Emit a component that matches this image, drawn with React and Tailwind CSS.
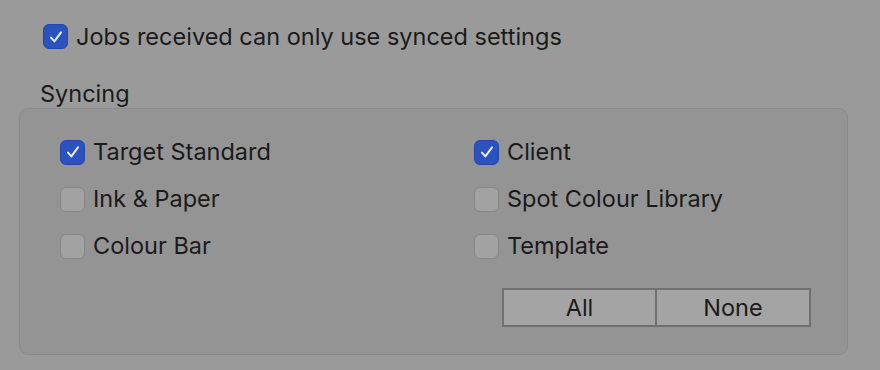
import React, { useState } from "react";

const font = { fontFamily: 'Inter, "Liberation Sans", Arial, sans-serif' };

const Check = ({ checked, onChange }) => (
  <button
    onClick={onChange}
    className={
      checked
        ? "w-[25px] h-[25px] rounded-[6px] bg-[#2b52bd] border border-[#2447a8] flex items-center justify-center shrink-0"
        : "w-[25px] h-[25px] rounded-[6px] bg-[#a2a2a2] border border-[#868686] flex items-center justify-center shrink-0"
    }
  >
    {checked && (
      <svg width="16" height="16" viewBox="0 0 16 16" fill="none">
        <path d="M3 8.6 L6.4 12.4 L13 3.4" stroke="#e8ecf7" strokeWidth="2" strokeLinecap="round" strokeLinejoin="round" />
      </svg>
    )}
  </button>
);

const Row = ({ label, checked, onChange }) => (
  <div className="flex items-center gap-[8px] h-[25px]">
    <Check checked={checked} onChange={onChange} />
    <span className="text-[23.5px] text-[#1a1a1a] leading-none">{label}</span>
  </div>
);

export default function App() {
  const [jobsOnly, setJobsOnly] = useState(true);
  const [sync, setSync] = useState({
    target: true,
    ink: false,
    bar: false,
    client: true,
    spot: false,
    template: false,
  });

  const toggle = (k) => setSync({ ...sync, [k]: !sync[k] });
  const setAll = (v) =>
    setSync({ target: v, ink: v, bar: v, client: v, spot: v, template: v });

  return (
    <div className="w-[880px] h-[370px] bg-[#9a9a9a] overflow-hidden" style={font}>
      <div className="pt-[24px] pl-[43px]">
        <Row label="Jobs received can only use synced settings" checked={jobsOnly} onChange={() => setJobsOnly(!jobsOnly)} />
      </div>

      <div className="pl-[40px] pt-[33px] text-[23.5px] text-[#1a1a1a] leading-none">Syncing</div>

      <div className="mt-[2px] ml-[19px] w-[829px] h-[247px] rounded-[9px] bg-[#949494] border border-[#8b8b8b] pl-[40px] pr-[36px] pt-[31px]">
        <div className="grid grid-cols-[414px_1fr] gap-y-[22px]">
          <Row label="Target Standard" checked={sync.target} onChange={() => toggle("target")} />
          <Row label="Client" checked={sync.client} onChange={() => toggle("client")} />
          <Row label="Ink & Paper" checked={sync.ink} onChange={() => toggle("ink")} />
          <Row label="Spot Colour Library" checked={sync.spot} onChange={() => toggle("spot")} />
          <Row label="Colour Bar" checked={sync.bar} onChange={() => toggle("bar")} />
          <Row label="Template" checked={sync.template} onChange={() => toggle("template")} />
        </div>

        <div className="flex justify-end mt-[29px]">
          <div className="flex border-2 border-[#707070] bg-[#a4a4a4]">
            <button onClick={() => setAll(true)} className="w-[153px] h-[35px] text-[23.5px] text-[#1a1a1a] border-r-2 border-[#707070]">
              All
            </button>
            <button onClick={() => setAll(false)} className="w-[152px] h-[35px] text-[23.5px] text-[#1a1a1a]">
              None
            </button>
          </div>
        </div>
      </div>
    </div>
  );
}
